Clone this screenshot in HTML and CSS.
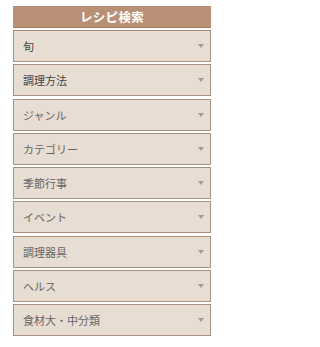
FILE: index.html
```html
<!DOCTYPE html>
<html lang="ja">
<head>
<meta charset="utf-8">
<title>レシピ検索</title>
<link rel="stylesheet" href="styles.css">
</head>
<body>
<div class="box">
  <div class="head">レシピ検索</div>
  <div class="list">
    <div class="sel dark"><span>旬</span><i class="arr"></i></div>
    <div class="sel dark"><span>調理方法</span><i class="arr"></i></div>
    <div class="sel"><span>ジャンル</span><i class="arr"></i></div>
    <div class="sel"><span>カテゴリー</span><i class="arr"></i></div>
    <div class="sel"><span>季節行事</span><i class="arr"></i></div>
    <div class="sel"><span>イベント</span><i class="arr"></i></div>
    <div class="sel"><span>調理器具</span><i class="arr"></i></div>
    <div class="sel"><span>ヘルス</span><i class="arr"></i></div>
    <div class="sel"><span>食材大・中分類</span><i class="arr"></i></div>
  </div>
</div>
</body>
</html>
```
FILE: styles.css
```css
html, body { margin: 0; padding: 0; background: #ffffff; }
body { font-family: "Noto Sans CJK JP", "Noto Sans", sans-serif; }
.box { width: 198px; margin: 6px 0 0 13px; }
.head {
  height: 21px;
  line-height: 21px;
  background: #b98f76;
  border-bottom: 1px solid #a57d66;
  color: #fff;
  font-weight: bold;
  font-size: 12.5px;
  text-align: center;
  letter-spacing: 0.3px;
}
.list { display: flex; flex-direction: column; gap: 2.25px; margin-top: 2px; }
.sel {
  box-sizing: border-box;
  height: 32px;
  border: 1px solid #a8917f;
  background: #e7ddd3;
  display: flex;
  align-items: center;
  justify-content: space-between;
  padding: 0 6px 0 9px;
  font-size: 11px;
  color: #666;
}
.sel.dark { color: #444; }
.arr {
  width: 0; height: 0;
  border-left: 3px solid transparent;
  border-right: 3px solid transparent;
  border-top: 4px solid #b0968a;
}
```
